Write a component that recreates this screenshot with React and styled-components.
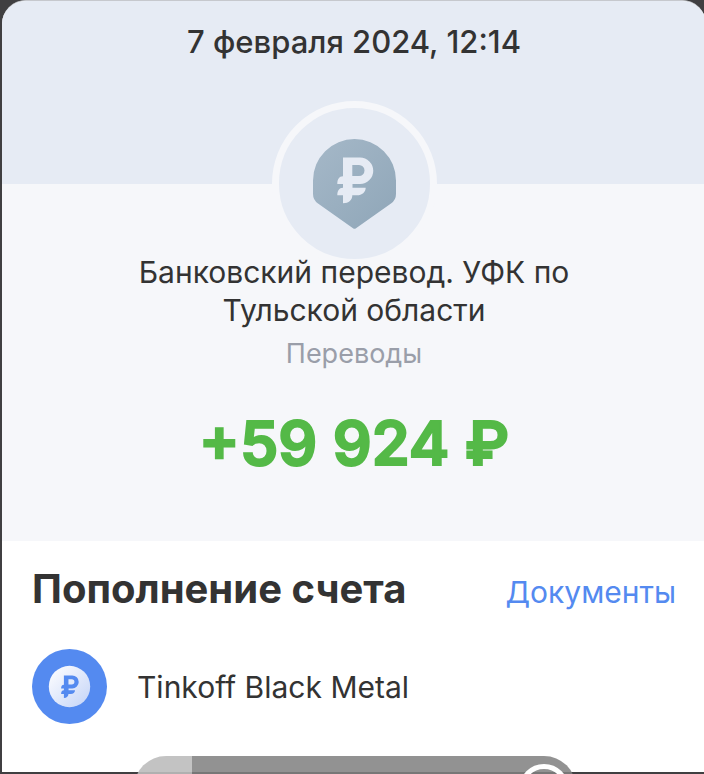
import React from "react";
import styled, { createGlobalStyle } from "styled-components";

function Ruble(props) {
  return (
    <path
      transform={props.transform}
      fill={props.fill}
      fillRule="evenodd"
      d="M30 18.5H47A13.25 13.25 0 0 1 47 45H39.5V48.7H52.7C52.7 53 49 56.3 44 56.3H39.3C39.3 61 36 64.3 30 64.3V56.3H24.3C24.3 52 26 48.7 30 48.7V45H24.3C24.3 40.5 26 37.3 30 37.3ZM39.3 26V37H46A5.5 5.5 0 0 0 46 26Z"
    />
  );
}

function TransferIcon() {
  return (
    <svg width="83" height="90" viewBox="0 0 83 90" aria-hidden="true">
      <defs>
        <linearGradient id="shield" x1="0" y1="0" x2="1" y2="1">
          <stop offset="0" stopColor="#a5b8c8" />
          <stop offset="1" stopColor="#8fa6b8" />
        </linearGradient>
      </defs>
      <path
        fill="url(#shield)"
        d="M0 41.5A41.5 41.5 0 0 1 83 41.5V55Q83 61 78 64.5L43 89.3Q41.5 90.4 40 89.3L5 64.5Q0 61 0 55Z"
      />
      <Ruble fill="#e6ebf4" />
    </svg>
  );
}

function AccountIcon() {
  return (
    <svg width="75" height="75" viewBox="0 0 75 75" aria-hidden="true">
      <defs>
        <linearGradient id="coin" x1="0" y1="0" x2="1" y2="1">
          <stop offset="0.15" stopColor="#f7f9fe" />
          <stop offset="1" stopColor="#c3d3f7" />
        </linearGradient>
      </defs>
      <circle cx="37.5" cy="37.5" r="37.5" fill="#548af0" />
      <circle cx="37.5" cy="37.5" r="20.7" fill="url(#coin)" />
      <Ruble fill="#548af0" transform="translate(17.2 17.4) scale(0.49)" />
    </svg>
  );
}

function App() {
  return (
    <>
      <GlobalStyle />
      <Sheet>
        <Header>
          <time dateTime="2024-02-07T12:14">7 февраля 2024, 12:14</time>
        </Header>
        <Summary>
          <Avatar>
            <TransferIcon />
          </Avatar>
          <Title>Банковский перевод. УФК по Тульской области</Title>
          <Category>Переводы</Category>
          <Amount>+59 924 ₽</Amount>
        </Summary>
        <Details>
          <DetailsHead>
            <h2>Пополнение счета</h2>
            <DocsLink href="#documents">Документы</DocsLink>
          </DetailsHead>
          <Account>
            <AccountIcon />
            <span>Tinkoff Black Metal</span>
          </Account>
        </Details>
      </Sheet>
      <Overlay>
        <OverlayStart />
        <OverlayRest />
        <Knob />
      </Overlay>
    </>
  );
}

export default App;

const GlobalStyle = createGlobalStyle`
  * {
    box-sizing: border-box;
  }

  body {
    margin: 0;
    background: #403f41;
    color: #333;
    font-family: Inter, "Liberation Sans", sans-serif;
    overflow: hidden;
  }
`;

const Sheet = styled.main`
  display: flex;
  flex-direction: column;
  min-height: calc(100vh - 2px);
  margin: 0 -2px 2px 2px;
  border-top: 1px solid #c6c8cd;
  border-radius: 24px 24px 0 0;
  background: #fff;
  overflow: hidden;
`;

const Header = styled.header`
  height: 183px;
  padding-top: 21px;
  background: #e6ebf4;
  text-align: center;
  font-size: 31px;
  line-height: 40px;
  font-weight: 500;
`;

const Summary = styled.section`
  display: flex;
  flex-direction: column;
  align-items: center;
  padding: 0 120px 58px;
  background: #f6f7fa;
  text-align: center;
`;

const Avatar = styled.div`
  display: flex;
  align-items: center;
  justify-content: center;
  width: 165px;
  height: 165px;
  margin-top: -83px;
  margin-bottom: -13px;
  border: 7px solid #f6f7fa;
  border-radius: 50%;
  background: #e6ebf4;
`;

const Title = styled.h1`
  margin: 0;
  font-size: 30px;
  line-height: 38px;
  font-weight: 400;
`;

const Category = styled.p`
  margin: 8px 0 0;
  color: #9a9ea9;
  font-size: 27px;
  line-height: 34px;
`;

const Amount = styled.p`
  margin: 32px 0 0;
  color: #54b947;
  font-size: 61px;
  line-height: 80px;
  font-weight: 600;
  white-space: nowrap;
  -webkit-text-stroke: 2px #54b947;
`;

const Details = styled.section`
  padding: 24px 30px 48px;
`;

const DetailsHead = styled.div`
  display: flex;
  align-items: baseline;
  justify-content: space-between;

  h2 {
    margin: 0;
    font-size: 40px;
    line-height: 48px;
    font-weight: 700;
  }
`;

const DocsLink = styled.a`
  color: #548af0;
  font-size: 30px;
  line-height: 40px;
  text-decoration: none;
`;

const Account = styled.div`
  display: flex;
  align-items: center;
  gap: 30px;
  margin-top: 36px;
  font-size: 30px;
  line-height: 40px;
`;

/* pill that floats over the sheet and runs past the bottom edge */
const Overlay = styled.div`
  position: fixed;
  right: 128px;
  bottom: -46px;
  left: 134px;
  display: flex;
  height: 64px;
  border-radius: 32px;
  overflow: hidden;
`;

const OverlayStart = styled.div`
  width: 58px;
  background: rgba(188, 188, 188, 0.9);
`;

const OverlayRest = styled.div`
  flex: 1;
  background: rgba(128, 128, 128, 0.86);
`;

const Knob = styled.div`
  position: absolute;
  top: 8px;
  right: 7px;
  width: 50px;
  height: 50px;
  border: 5px solid #fff;
  border-radius: 50%;
`;
